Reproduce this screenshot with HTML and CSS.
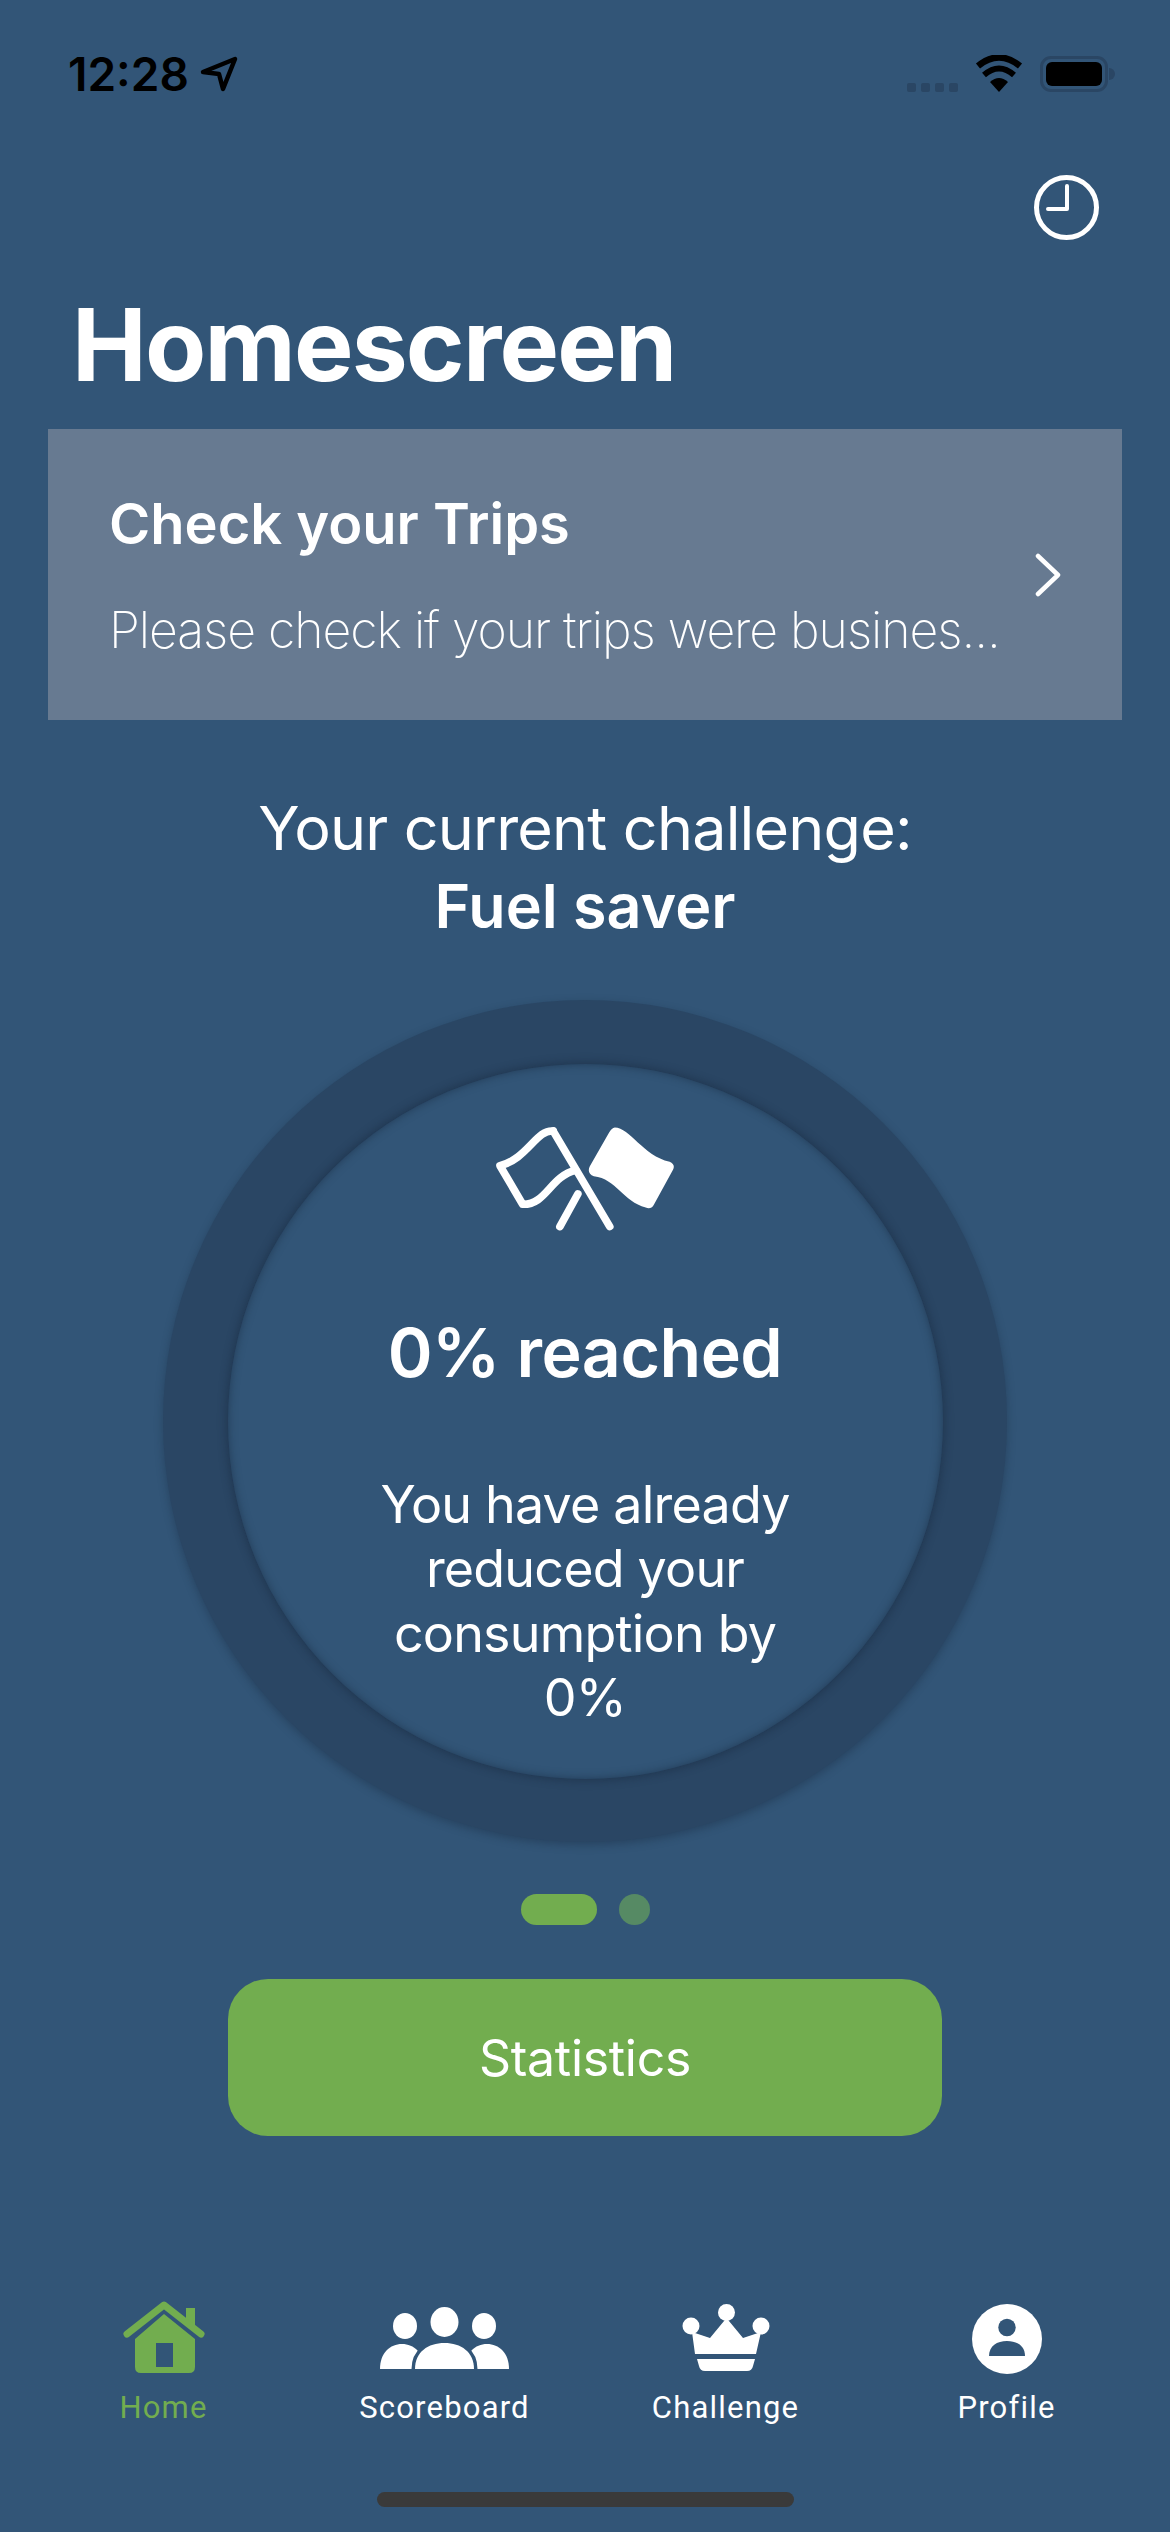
FILE: index.html
```html
<!DOCTYPE html>
<html lang="en">

<head>
    <meta charset="UTF-8">
    <meta name="viewport" content="width=device-width, initial-scale=1.0">
    <title>Homescreen</title>
    <link rel="stylesheet" href="styles.css">
</head>

<body>
    <div class="screen">
        <!-- Status bar -->
        <div class="status">
            <div class="status-left">
                <span class="time">12:28</span>
                <svg class="locate" width="38" height="36" viewBox="0 0 38 36">
                    <path d="M3 16 L35 3 L23 33 L19 18 Z" fill="none" stroke="#000" stroke-width="4.5" stroke-linejoin="round"/>
                </svg>
            </div>
            <div class="status-right">
                <div class="cell">
                    <span></span><span></span><span></span><span></span>
                </div>
                <svg class="wifi" width="48" height="37" viewBox="0 0 48 37">
                    <path d="M24 37 L15 27 Q24 19 33 27 Z" fill="#000"/>
                    <path d="M9 20 Q24 7 39 20" fill="none" stroke="#000" stroke-width="6"/>
                    <path d="M3 11 Q24 -6 45 11" fill="none" stroke="#000" stroke-width="6.5"/>
                </svg>
                <div class="battery">
                    <div class="battery-body"><div class="battery-fill"></div></div>
                    <div class="battery-tip"></div>
                </div>
            </div>
        </div>

        <div class="top-action">
            <svg width="65" height="65" viewBox="0 0 65 65">
                <circle cx="32.5" cy="32.5" r="30" fill="none" stroke="#fff" stroke-width="5"/>
                <path d="M33 11 V34 H14" fill="none" stroke="#fff" stroke-width="4" stroke-linecap="round" stroke-linejoin="round"/>
            </svg>
        </div>

        <h1 class="title">Homescreen</h1>

        <div class="trips-card">
            <div class="trips-text">
                <div class="trips-title">Check your Trips</div>
                <div class="trips-sub">Please check if your trips were busines...</div>
            </div>
            <svg class="chevron" width="28" height="44" viewBox="0 0 28 44">
                <path d="M4 3 L24 22 L4 41" fill="none" stroke="#fff" stroke-width="4.5" stroke-linecap="round" stroke-linejoin="round"/>
            </svg>
        </div>

        <div class="challenge-head">
            <div>Your current challenge:</div>
            <div class="challenge-name">Fuel saver</div>
        </div>

        <div class="ring">
            <div class="disc">
                <svg class="flags" width="178" height="104" viewBox="168 145 535 310">
                    <path d="M340 156 C290 150 262 240 180 260 L248 376 C320 378 330 292 408 274" fill="none" stroke="#fff" stroke-width="23" stroke-linejoin="round" stroke-linecap="round"/>
                    <path d="M340 156 L510 443" fill="none" stroke="#fff" stroke-width="23" stroke-linecap="round"/>
                    <path d="M360 443 L414 345" fill="none" stroke="#fff" stroke-width="23" stroke-linecap="round"/>
                    <path d="M525 145 C570 145 610 230 690 248 Q708 256 700 272 L642 378 Q634 392 618 386 C550 368 530 300 462 292 Q440 282 450 262 L508 160 Q516 146 525 145 Z" fill="#fff"/>
                </svg>
                <div class="reached">0% reached</div>
                <div class="reduced">You have already<br>reduced your<br>consumption by<br>0%</div>
            </div>
        </div>

        <div class="pager">
            <span class="pager-on"></span>
            <span class="pager-off"></span>
        </div>

        <div class="stats-btn">Statistics</div>

        <!-- Tab bar -->
        <div class="tabs">
            <div class="tab tab-active">
                <svg width="82" height="73" viewBox="0 0 82 73">
                    <path d="M63 7 H72 V24 H63 Z" fill="#72ad4f"/>
                    <path d="M4 33 L41 4 L78 33" fill="none" stroke="#72ad4f" stroke-width="7" stroke-linecap="round" stroke-linejoin="round"/>
                    <path fill-rule="evenodd" d="M41 13 L72 38 V66 Q72 72 66 72 H18 Q12 72 12 66 V38 Z M33 42 V66 H50 V42 Z" fill="#72ad4f"/>
                </svg>
                <span>Home</span>
            </div>
            <div class="tab">
                <svg width="129" height="73" viewBox="0 -6 129 73">
                    <ellipse cx="25" cy="19" rx="12" ry="13" fill="#fff"/>
                    <ellipse cx="104" cy="19" rx="12" ry="13" fill="#fff"/>
                    <ellipse cx="64.500" cy="15" rx="14" ry="15" fill="#fff"/>
                    <path d="M0 62 C0 46 10 37 22 37 C34 37 44 46 44 62 Z" fill="#fff"/>
                    <path d="M85 62 C85 46 95 37 107 37 C119 37 129 46 129 62 Z" fill="#fff"/>
                    <path d="M35 62 C35 45 48 36 64.500 36 C81 36 94 45 94 62 Z" fill="#fff" stroke="#325577" stroke-width="7" paint-order="stroke"/>
                    <rect x="30" y="62" width="70" height="6" fill="#325577"/>
                </svg>
                <span>Scoreboard</span>
            </div>
            <div class="tab">
                <svg width="88" height="73" viewBox="0 -3 88 73">
                    <circle cx="44.500" cy="8.500" r="8.500" fill="#fff"/>
                    <circle cx="9" cy="22" r="8.500" fill="#fff"/>
                    <circle cx="79" cy="22" r="8.500" fill="#fff"/>
                    <path d="M10 28 L28 34 L44.500 14 L61 34 L79 28 L74 50 H13 Z" fill="#fff"/>
                    <path d="M15 55 H73 L71 62 Q70 67 65 67 H23 Q18 67 17 62 Z" fill="#fff"/>
                </svg>
                <span>Challenge</span>
            </div>
            <div class="tab">
                <svg width="70" height="73" viewBox="0 -3 70 73">
                    <circle cx="35" cy="35" r="35" fill="#fff"/>
                    <circle cx="35" cy="23.500" r="8.700" fill="#325577"/>
                    <path d="M17 52 C17 42 25 37 35 37 C45 37 53 42 53 52 Z" fill="#325577"/>
                </svg>
                <span>Profile</span>
            </div>
        </div>

        <div class="home-bar"></div>
    </div>
</body>

</html>
```

FILE: styles.css
```css
body {
    margin: 0;
    background-color: #325577;
    color: white;
    font-family: Inter, "Liberation Sans", sans-serif;
}

.screen {
    width: 1170px;
    height: 2532px;
    overflow: hidden;
    display: flex;
    flex-direction: column;
    align-items: center;
}

/* status bar */
.status {
    width: 100%;
    box-sizing: border-box;
    height: 110px;
    padding: 55px 55px 0 68px;
    display: flex;
    justify-content: space-between;
    align-items: flex-start;
}

.status-left {
    display: flex;
    align-items: center;
    gap: 11px;
    height: 38px;
}

.time {
    font-size: 46px;
    font-weight: 600;
    color: #000;
    line-height: 40px;
}

.status-right {
    display: flex;
    align-items: flex-start;
    height: 37px;
}

.cell {
    display: flex;
    gap: 5px;
    margin-top: 28px;
    margin-right: 17px;
}

.cell span {
    width: 9px;
    height: 9px;
    background-color: #2a4664;
    border-radius: 2px;
}

.wifi {
    margin-right: 17px;
}

.battery {
    display: flex;
    align-items: center;
    height: 36px;
    margin-top: 1px;
}

.battery-body {
    box-sizing: border-box;
    width: 68px;
    height: 36px;
    border: 3px solid #2a4664;
    border-radius: 11px;
    padding: 3px;
}

.battery-fill {
    height: 100%;
    background-color: #000;
    border-radius: 6px;
}

.battery-tip {
    width: 6px;
    height: 12px;
    background-color: #2a4664;
    border-radius: 0 6px 6px 0;
    margin-left: 1px;
}

.top-action {
    width: 100%;
    box-sizing: border-box;
    padding: 65px 71px 0 0;
    display: flex;
    justify-content: flex-end;
    height: 130px;
}

.title {
    width: 100%;
    box-sizing: border-box;
    margin: 0;
    padding-left: 72px;
    font-size: 100px;
    font-weight: 700;
    line-height: 120px;
    letter-spacing: -1.800px;
    height: 189px;
    padding-top: 45px;
}

/* trips card */
.trips-card {
    box-sizing: border-box;
    width: 1074px;
    height: 291px;
    flex-shrink: 0;
    background-color: #677a91;
    padding: 0 60px 0 61px;
    display: flex;
    align-items: center;
    justify-content: space-between;
}

.trips-title {
    font-size: 56px;
    font-weight: 600;
    line-height: 68px;
    margin-bottom: 42px;
}

.trips-sub {
    font-size: 50px;
    font-weight: 200;
    line-height: 60px;
    letter-spacing: -1.050px;
    white-space: nowrap;
}

.challenge-head {
    text-align: center;
    font-size: 61px;
    letter-spacing: -0.800px;
    line-height: 78px;
    margin-top: 69px;
}

.challenge-name {
    font-size: 61px;
    font-weight: 600;
    letter-spacing: 0;
}

/* progress ring */
.ring {
    box-sizing: border-box;
    width: 844px;
    height: 842px;
    margin-top: 55px;
    flex-shrink: 0;
    border-radius: 50%;
    background-color: #2a4664;
    box-shadow: 0 3px 8px rgba(20, 35, 55, 0.35);
    display: flex;
    align-items: center;
    justify-content: center;
}

.disc {
    box-sizing: border-box;
    width: 715px;
    height: 715px;
    border-radius: 50%;
    background-color: #325577;
    box-shadow: 0 0 8px 2px rgba(20, 35, 55, 0.4), inset 0 0 9px rgba(20, 35, 55, 0.5);
    display: flex;
    flex-direction: column;
    align-items: center;
    text-align: center;
    padding-top: 63px;
}

.flags {
    flex-shrink: 0;
}

.reached {
    font-size: 68px;
    font-weight: 600;
    letter-spacing: -0.500px;
    line-height: 86px;
    margin-top: 78px;
}

.reduced {
    font-size: 52px;
    letter-spacing: -0.800px;
    line-height: 64.500px;
    margin-top: 78px;
}

/* pager dots */
.pager {
    display: flex;
    gap: 22px;
    margin-top: 52px;
}

.pager-on {
    width: 76px;
    height: 31px;
    border-radius: 16px;
    background-color: #72ad4f;
}

.pager-off {
    width: 31px;
    height: 31px;
    border-radius: 50%;
    background-color: #568a64;
}

.stats-btn {
    box-sizing: border-box;
    width: 714px;
    height: 157px;
    margin-top: 54px;
    flex-shrink: 0;
    background-color: #72ad4f;
    border-radius: 40px;
    font-size: 50px;
    letter-spacing: -0.300px;
    display: flex;
    align-items: center;
    justify-content: center;
}

/* tab bar */
.tabs {
    width: 100%;
    box-sizing: border-box;
    margin-top: 165px;
    padding: 0 23px;
    display: grid;
    grid-template-columns: repeat(4, 281px);
}

.tab {
    display: flex;
    flex-direction: column;
    align-items: center;
    gap: 16px;
    font-family: Roboto, "Liberation Sans", sans-serif;
    font-size: 31px;
    letter-spacing: 1.200px;
    line-height: 36px;
}

.tab-active {
    color: #72ad4f;
}

.home-bar {
    width: 417px;
    height: 15px;
    border-radius: 8px;
    background-color: #3a3a3a;
    margin-top: 66px;
    flex-shrink: 0;
}
```
